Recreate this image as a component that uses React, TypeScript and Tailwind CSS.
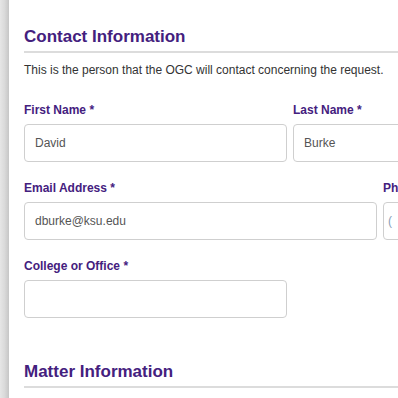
import React from "react";

const purple = "text-[#44207e]";

function Label({ children }: { children: React.ReactNode }) {
  return (
    <div className={`text-[12px] leading-[16px] font-bold ${purple} whitespace-nowrap`}>
      {children} <span>*</span>
    </div>
  );
}

function Input({ value, className = "" }: { value?: string; className?: string }) {
  return (
    <div
      className={`mt-[6px] h-[38px] border border-[#cfcfcf] rounded-[4px] bg-white flex items-center pl-[10px] text-[12px] leading-[16px] text-[#555555] whitespace-nowrap overflow-hidden ${className}`}
    >
      {value}
    </div>
  );
}

export default function App() {
  return (
    <div
      className="w-[398px] h-[398px] overflow-hidden bg-white flex"
      style={{ fontFamily: '"Liberation Sans", Arial, sans-serif' }}
    >
      <div className="w-[9px] shrink-0 h-full bg-gradient-to-r from-[#e6e6e6] via-[#dadada] to-[#c6c6c6]" />
      <div className="flex-1 min-w-0 pl-[15px] pt-[27px]">
        <div className="w-[420px]">
          <h2 className={`text-[17px] leading-[20px] font-bold ${purple} pb-[4px] border-b-2 border-[#dcdcdc]`}>
            Contact Information
          </h2>
          <p className="mt-[9px] text-[12px] leading-[16px] text-[#333333] whitespace-nowrap">
            This is the person that the OGC will contact concerning the request.
          </p>

          <div className="mt-[24px] flex gap-[6px]">
            <div className="w-[263px] shrink-0">
              <Label>First Name</Label>
              <Input value="David" />
            </div>
            <div className="w-[263px] shrink-0">
              <Label>Last Name</Label>
              <Input value="Burke" />
            </div>
          </div>

          <div className="mt-[18px] flex gap-[6px]">
            <div className="w-[353px] shrink-0">
              <Label>Email Address</Label>
              <Input value="dburke@ksu.edu" />
            </div>
            <div className="w-[200px] shrink-0">
              <div className={`text-[12px] leading-[16px] font-bold ${purple} whitespace-nowrap`}>
                Phone Number
              </div>
              <div className="mt-[6px] h-[38px] border border-[#cfcfcf] rounded-[4px] bg-white flex items-center pl-[4px] text-[12px] leading-[16px] text-[#8aa0b8] whitespace-nowrap overflow-hidden">
                (
              </div>
            </div>
          </div>

          <div className="mt-[18px] flex">
            <div className="w-[263px] shrink-0">
              <Label>College or Office</Label>
              <Input />
            </div>
          </div>

          <h2 className={`mt-[44px] text-[17px] leading-[20px] font-bold ${purple} pb-[4px] border-b-2 border-[#dcdcdc]`}>
            Matter Information
          </h2>
        </div>
      </div>
    </div>
  );
}
